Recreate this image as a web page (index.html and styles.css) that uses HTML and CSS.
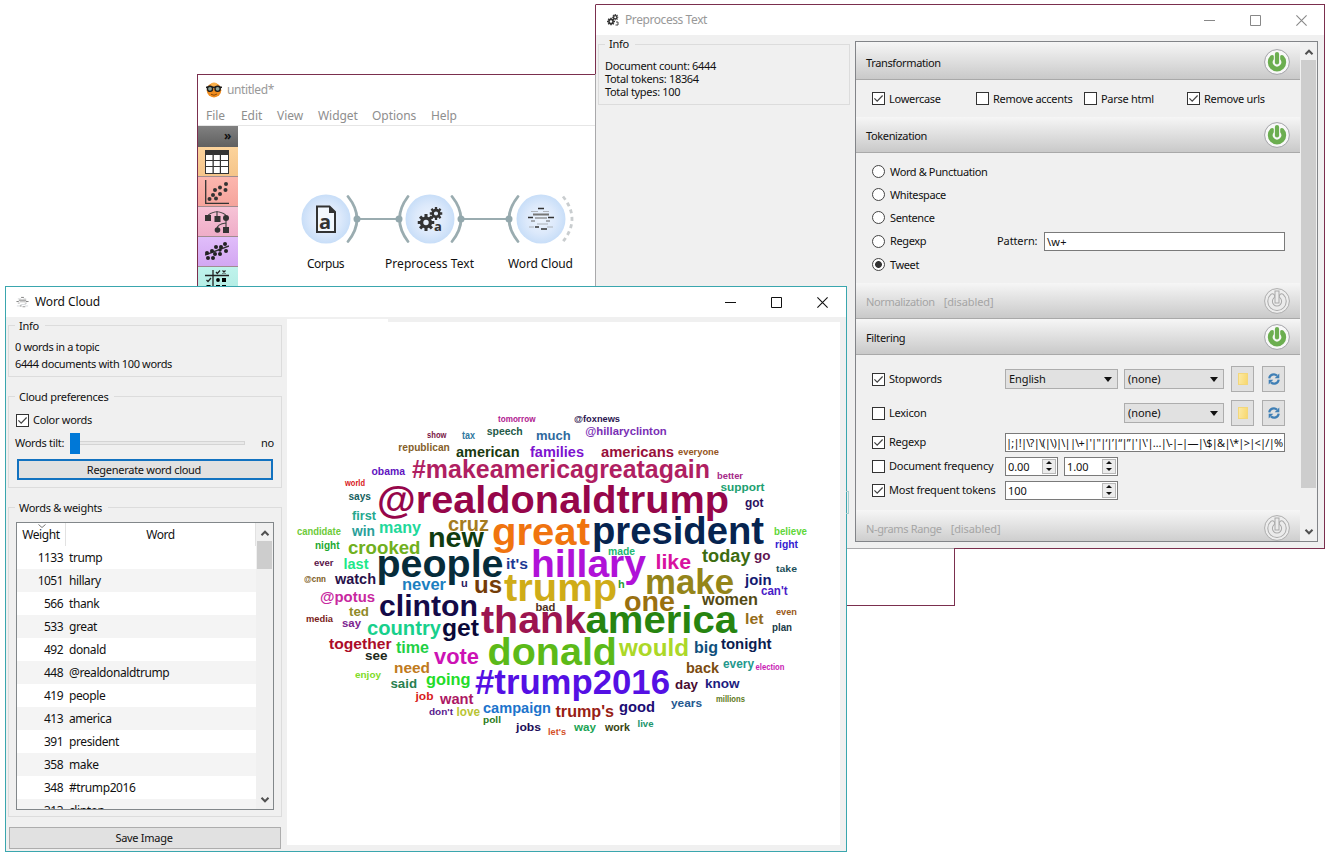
FILE: index.html
```html
<!DOCTYPE html>
<html lang="en">
<head>
<meta charset="utf-8">
<title>Word Cloud workflow</title>
<link rel="stylesheet" href="styles.css">
</head>
<body>
<svg class="defs" width="0" height="0" aria-hidden="true">
  <defs>
    <radialGradient id="node"><stop offset="0" stop-color="#eef5fe"/><stop offset=".6" stop-color="#dce9fb"/><stop offset="1" stop-color="#c8def8"/></radialGradient>
    <symbol id="power-on" viewBox="0 0 26 26"><circle cx="13" cy="13" r="12.4" fill="#f8f8f8" stroke="#a3a3a8"/><path d="M8.2 8.6a6.7 6.7 0 1 0 9.600 0" fill="none" stroke="#6cae50" stroke-width="5" stroke-linecap="round"/><path d="M13 5v8" stroke="#f8f8f8" stroke-width="6.4" stroke-linecap="round"/><path d="M13 5v8.500" stroke="#6cae50" stroke-width="4.2" stroke-linecap="round"/></symbol>
    <symbol id="power-off" viewBox="0 0 26 26"><circle cx="13" cy="13" r="12.4" fill="#ededed" stroke="#adadad"/><path d="M8.4 8.2a6.9 6.9 0 1 0 9.2 0" fill="none" stroke="#a9a9a9" stroke-width="5.6" stroke-linecap="round"/><path d="M8.4 8.2a6.9 6.9 0 1 0 9.2 0" fill="none" stroke="#ebebeb" stroke-width="3.6" stroke-linecap="round"/><path d="M13 5v8" stroke="#a9a9a9" stroke-width="5" stroke-linecap="square"/><path d="M13 5v8" stroke="#ebebeb" stroke-width="3" stroke-linecap="square"/></symbol>
    <symbol id="gear" viewBox="-10 -10 20 20"><circle r="5.2" fill="none" stroke="#333" stroke-width="4"/><path d="M0-10V-6M0 10V6M-10 0H-6M10 0H6M-7-7-4.5-4.5M7 7 4.5 4.5M-7 7-4.5 4.5M7-7 4.5-4.5" stroke="#333" stroke-width="3.6"/></symbol>
    <symbol id="refresh" viewBox="0 0 12 12"><path d="M1.3 5.4A4.6 4.6 0 0 1 9 2.6M10.7 6.6A4.6 4.6 0 0 1 3 9.4" fill="none" stroke="#3f7fb5" stroke-width="2.2"/><path d="M11.3 .6V5.2H6.7zM.7 11.4V6.8H5.3z" fill="#3f7fb5"/></symbol>
    <symbol id="up" viewBox="0 0 10 8"><path d="M1.500 6.2 5 2.700 8.500 6.2" fill="none" stroke="#505050" stroke-width="2"/></symbol>
    <symbol id="down" viewBox="0 0 10 8"><path d="M1.500 1.8 5 5.300 8.500 1.8" fill="none" stroke="#505050" stroke-width="2"/></symbol>
    <symbol id="tick" viewBox="0 0 11 11"><path d="M1.4 5.3 4.2 8.2 9.6 2.5" fill="none" stroke="#444" stroke-width="1.2"/></symbol>
    <symbol id="cloudlines" viewBox="0 0 28 24"><path d="M11 2h6" stroke="#333" stroke-width="1.4"/><path d="M4 5h7M16 5h6" stroke="#b0b4ba"/><path d="M6 8h16" stroke="#777" stroke-width="2"/><path d="M1 11h5M21 11h6M8 20.500h4M14 22.500h6" stroke="#333" stroke-width="1.3"/><path d="M8 11.500h12M4 14.500h4M19 14.500h4" stroke="#666"/><path d="M10 17.500h11M2 20.500h5M20 20.500h6" stroke="#aab0b6"/></symbol>
    <symbol id="min" viewBox="0 0 11 11"><path d="M0 5.5h11" stroke="currentColor"/></symbol>
    <symbol id="max" viewBox="0 0 11 11"><path d="M.5.5h10v10H.5z" fill="none" stroke="currentColor"/></symbol>
    <symbol id="close" viewBox="0 0 11 11"><path d="M.4.4 10.6 10.6M10.6.4.4 10.6" stroke="currentColor" stroke-width="1.1"/></symbol>
  </defs>
</svg>

<section class="window main-window">
  <header class="titlebar main-title">
    <svg class="app-icon" width="16" height="16" viewBox="0 0 16 16"><circle cx="8" cy="8.2" r="7.3" fill="#f08c1e"/><circle cx="8" cy="4" r="3.5" fill="#f9b04c"/><path d="M0 5.3h16" stroke="#222" stroke-width="1.5"/><circle cx="4" cy="6.8" r="2.6" fill="#8da39a" stroke="#1c1c1c" stroke-width="1.4"/><circle cx="11.6" cy="6.8" r="2.6" fill="#8da39a" stroke="#1c1c1c" stroke-width="1.4"/><path d="M5 12.3q3 2 6-.3" fill="none" stroke="#8c4a08"/></svg>
    <span>untitled*</span>
  </header>
  <nav class="menu"><span class="m-file">File</span><span class="m-edit">Edit</span><span class="m-view">View</span><span class="m-widget">Widget</span><span class="m-options">Options</span><span>Help</span></nav>
  <div class="workspace">
    <aside class="toolbox">
      <div class="tool-head">»</div>
      <div class="tool data"><svg width="24" height="24" viewBox="0 0 24 24"><path d="M0 0h24v24H0z" fill="#333"/><path d="M1 5h6.5v5H1zM8.8 5h6v5h-6zM16 5h7v5h-7zM1 11h6.5v5H1zM8.8 11h6v5h-6zM16 11h7v5h-7zM1 17h6.5v6H1zM8.8 17h6v6h-6zM16 17h7v6h-7z" fill="#fff"/></svg></div>
      <div class="tool vis"><svg width="24" height="24" viewBox="0 0 24 24"><path d="M.7 0v23.3H24" fill="none" stroke="#333" stroke-width="1.3"/><g fill="#333"><circle cx="4.500" cy="19" r="2"/><circle cx="8" cy="15" r="2"/><circle cx="11" cy="18.500" r="2"/><circle cx="10" cy="10" r="2"/><circle cx="15" cy="14" r="2"/><circle cx="15" cy="7.500" r="2"/><circle cx="20.500" cy="10" r="2"/><circle cx="21" cy="4" r="2"/></g></svg></div>
      <div class="tool model"><svg width="24" height="24" viewBox="0 0 24 24"><path d="M3 6Q4 3 12 1.500Q20 3 21 6M12 1V7M21 6V18M12 19Q12 14 21 13" fill="none" stroke="#444" stroke-width="1.200"/><path d="M0 5h6v6H0zM9.500 6h6v6h-6zM18 17h6v6h-6z" fill="#333"/><circle cx="21" cy="8" r="3" fill="#333"/><circle cx="12.500" cy="20" r="2.800" fill="#333"/></svg></div>
      <div class="tool regress"><svg width="24" height="24" viewBox="0 0 24 24"><path d="M0 15 24 6" stroke="#333" stroke-width="1.400"/><g fill="#222"><circle cx="2" cy="13" r="2"/><circle cx="3" cy="18" r="2"/><circle cx="8" cy="18" r="2"/><circle cx="7" cy="11" r="2"/><circle cx="10" cy="14" r="2"/><circle cx="11" cy="7" r="2"/><circle cx="15" cy="14" r="2"/><circle cx="16" cy="7" r="2"/><circle cx="20" cy="4" r="2"/><circle cx="21" cy="11" r="2"/><circle cx="15" cy="10" r="1.700"/></g></svg></div>
      <div class="tool evaluate"><svg width="24" height="24" viewBox="0 0 24 24"><path d="M0 5.500h24M8 0v24" stroke="#222" stroke-width="1.300"/><path d="m11 2 1.300 1.500L15 .5M1.500 10 3 11.500 6 8" fill="none" stroke="#222" stroke-width="1.200"/><path d="m17.500.5 3 3m0-3-3 3" stroke="#222" stroke-width="1.200"/><circle cx="13" cy="10" r="1.900"/><path d="M17 8h4v4h-4zM1.500 15h4v4h-4zM11 15h4v4h-4zM17 15h4v4h-4z"/></svg></div>
    </aside>
    <svg class="workflow" width="357" height="160" viewBox="238 126 357 160">
      <g stroke="#9aacb0" fill="none" stroke-width="2"><path d="M357 219H399M461 219H508"/><path d="M348 196.500Q366 219 348 241.500M408 196.500Q391 219 408 241.500M452 196.500Q470 219 452 241.500M518 196.500Q500 219 518 241.500" stroke-width="2.800" stroke-linecap="round"/><path d="M563 196.500Q581 219 563 241.500" stroke="#c9cdcf" stroke-width="2.800" stroke-dasharray="4 3.500"/></g>
      <g fill="#93a8ad"><circle cx="357" cy="219" r="3.500"/><circle cx="399" cy="219" r="3.500"/><circle cx="461" cy="219" r="3.500"/><circle cx="509" cy="219" r="3.500"/></g>
      <g fill="url(#node)"><circle cx="326" cy="219" r="24.500"/><circle cx="430" cy="219" r="24.500"/><circle cx="541" cy="219" r="24.500"/></g>
      <path d="M317 206.500H329.500L335 212V232H317Z" fill="#f2f7fd" stroke="#333" stroke-width="2"/><path d="M329 206V213H336" fill="#333"/>
      <text class="glyph-a" x="319" y="229" font-size="20">a</text>
      <use href="#gear" x="417.500" y="214" width="17" height="17"/><use href="#gear" x="429.500" y="207" width="13" height="13"/>
      <text class="glyph-a" x="434" y="231" font-size="13">a</text>
      <use href="#cloudlines" x="527" y="206.500" width="28" height="24"/>
      <g class="node-label"><text x="307" y="268" textLength="37.500">Corpus</text><text x="385" y="268" textLength="89">Preprocess Text</text><text x="508" y="268" textLength="65">Word Cloud</text></g>
    </svg>
  </div>
</section>

<section class="window prep-window">
  <header class="titlebar prep-title">
    <svg width="12" height="12" viewBox="0 0 12 12"><use href="#gear" x="0" y="3.500" width="8" height="8"/><use href="#gear" x="5" y="0" width="6.500" height="6.500"/><path d="M9 8h2v3H8.500" fill="none" stroke="#444"/></svg>
    <span class="caption">Preprocess Text</span>
    <div class="controls"><svg width="11" height="11"><use href="#min"/></svg><svg width="11" height="11"><use href="#max"/></svg><svg width="11" height="11"><use href="#close"/></svg></div>
  </header>
  <div class="prep-body">
    <fieldset class="group prep-info"><legend>Info</legend><p>Document count: 6444</p><p>Total tokens: 18364</p><p>Total types: 100</p></fieldset>
    <div class="steps">
      <div class="steps-list">
        <div class="step-head first"><span>Transformation</span><svg width="26" height="26"><use href="#power-on"/></svg></div>
        <div class="transform-row">
          <label class="check"><i class="box"><svg width="11" height="11"><use href="#tick"/></svg></i>Lowercase</label>
          <label class="check"><i class="box"></i>Remove accents</label>
          <label class="check"><i class="box"></i>Parse html</label>
          <label class="check"><i class="box"><svg width="11" height="11"><use href="#tick"/></svg></i>Remove urls</label>
        </div>
        <div class="step-head"><span>Tokenization</span><svg width="26" height="26"><use href="#power-on"/></svg></div>
        <div class="token-rows">
          <label class="radio"><i class="dot"></i><span>Word &amp; Punctuation</span></label>
          <label class="radio"><i class="dot"></i>Whitespace</label>
          <label class="radio"><i class="dot"></i>Sentence</label>
          <div class="regexp-row"><label class="radio"><i class="dot"></i>Regexp</label><span class="pattern">Pattern:</span><div class="field">\w+</div></div>
          <label class="radio"><i class="dot on"></i>Tweet</label>
        </div>
        <div class="step-head off"><span>Normalization<b>[disabled]</b></span><svg width="26" height="26"><use href="#power-off"/></svg></div>
        <div class="step-head"><span>Filtering</span><svg width="26" height="26"><use href="#power-on"/></svg></div>
        <div class="filters">
          <div class="filter tall"><label class="check"><i class="box"><svg width="11" height="11"><use href="#tick"/></svg></i>Stopwords</label><div class="combo lang">English<i class="arrow"></i></div><div class="combo file">(none)<i class="arrow"></i></div><div class="tbtn"><i class="folder"></i></div><div class="tbtn"><svg width="12" height="12"><use href="#refresh"/></svg></div></div>
          <div class="filter tall"><label class="check lexicon"><i class="box"></i>Lexicon</label><div class="combo file">(none)<i class="arrow"></i></div><div class="tbtn"><i class="folder"></i></div><div class="tbtn"><svg width="12" height="12"><use href="#refresh"/></svg></div></div>
          <div class="filter"><label class="check"><i class="box"><svg width="11" height="11"><use href="#tick"/></svg></i>Regexp</label><div class="field regex"><span>|;|!|\?|\(|\)|\||\+|'|"|‘|’|“|”|'|\'|…|\-|–|—|\$|&amp;|\*|&gt;|&lt;|/|%</span></div></div>
          <div class="filter"><label class="check"><i class="box"></i>Document frequency</label><div class="spin short">0.00<i class="steppers"><b></b><b></b></i></div><div class="spin short">1.00<i class="steppers"><b></b><b></b></i></div></div>
          <div class="filter"><label class="check"><i class="box"><svg width="11" height="11"><use href="#tick"/></svg></i>Most frequent tokens</label><div class="spin long">100<i class="steppers"><b></b><b></b></i></div></div>
        </div>
        <div class="step-head off"><span>N-grams Range<b>[disabled]</b></span><svg width="26" height="26"><use href="#power-off"/></svg></div>
      </div>
      <div class="scroll"><svg width="10" height="8"><use href="#up"/></svg><div class="thumb"></div><svg class="end" width="10" height="8"><use href="#down"/></svg></div>
    </div>
  </div>
</section>

<section class="window cloud-window">
  <header class="titlebar cloud-title">
    <svg width="13" height="12" viewBox="0 0 28 24"><use href="#cloudlines"/></svg>
    <span class="caption">Word Cloud</span>
    <div class="controls"><svg width="11" height="11"><use href="#min"/></svg><svg width="11" height="11"><use href="#max"/></svg><svg width="11" height="11"><use href="#close"/></svg></div>
  </header>
  <div class="cloud-body">
    <div class="side">
      <fieldset class="group info"><legend>Info</legend><p>0 words in a topic</p><p>6444 documents with 100 words</p></fieldset>
      <fieldset class="group prefs"><legend>Cloud preferences</legend>
        <label class="check"><i class="box"><svg width="11" height="11"><use href="#tick"/></svg></i>Color words</label>
        <div class="tilt"><span class="tilt-label">Words tilt:</span><div class="slider"><i class="knob"></i><i class="track"></i></div><span>no</span></div>
        <button class="regen">Regenerate word cloud</button>
      </fieldset>
      <fieldset class="group weights"><legend>Words &amp; weights</legend>
        <div class="table">
          <div class="rows">
            <div class="thead"><span class="num">Weight<svg class="sort" width="8" height="4" viewBox="0 0 8 4"><path d="M.5.5 4 3.500 7.500.5" fill="none" stroke="#777"/></svg></span><span class="word">Word</span></div>
            <div class="row"><span>1133</span><span>trump</span></div>
            <div class="row"><span>1051</span><span>hillary</span></div>
            <div class="row"><span>566</span><span>thank</span></div>
            <div class="row"><span>533</span><span>great</span></div>
            <div class="row"><span>492</span><span>donald</span></div>
            <div class="row"><span>448</span><span>@realdonaldtrump</span></div>
            <div class="row"><span>419</span><span>people</span></div>
            <div class="row"><span>413</span><span>america</span></div>
            <div class="row"><span>391</span><span>president</span></div>
            <div class="row"><span>358</span><span>make</span></div>
            <div class="row"><span>348</span><span>#trump2016</span></div>
            <div class="row"><span>313</span><span>clinton</span></div>
          </div>
          <div class="scroll"><svg width="10" height="8"><use href="#up"/></svg><div class="thumb"></div><svg class="end" width="10" height="8"><use href="#down"/></svg></div>
        </div>
      </fieldset>
      <button class="save">Save Image</button>
    </div>
    <div class="canvas">
      <svg class="cloud" width="553" height="526" viewBox="287 319 553 526">
        <text x="498" y="422" font-size="9.500" fill="#b0208f" textLength="37.500" lengthAdjust="spacingAndGlyphs">tomorrow</text>
        <text x="574" y="422" font-size="9.500" fill="#2b1650" textLength="46" lengthAdjust="spacingAndGlyphs">@foxnews</text>
        <text x="585.300" y="435" font-size="11.500" fill="#7a2fb5" textLength="81.400" lengthAdjust="spacingAndGlyphs">@hillaryclinton</text>
        <text x="427" y="438" font-size="9.500" fill="#7a1545" textLength="19.500" lengthAdjust="spacingAndGlyphs">show</text>
        <text x="462" y="439" font-size="10" fill="#2f78a0" textLength="13" lengthAdjust="spacingAndGlyphs">tax</text>
        <text x="486.700" y="435" font-size="10.500" fill="#1f5a48" textLength="36" lengthAdjust="spacingAndGlyphs">speech</text>
        <text x="536" y="440" font-size="13.500" fill="#2f6a9e" textLength="34.700" lengthAdjust="spacingAndGlyphs">much</text>
        <text x="398.300" y="451" font-size="10.500" fill="#85602a" textLength="51.500" lengthAdjust="spacingAndGlyphs">republican</text>
        <text x="456" y="457" font-size="14.500" fill="#1a3a10" textLength="63.500" lengthAdjust="spacingAndGlyphs">american</text>
        <text x="530" y="457" font-size="14.500" fill="#7d12d0" textLength="54" lengthAdjust="spacingAndGlyphs">families</text>
        <text x="601" y="457" font-size="14.500" fill="#98103a" textLength="73" lengthAdjust="spacingAndGlyphs">americans</text>
        <text x="678" y="455" font-size="9.500" fill="#945522" textLength="41" lengthAdjust="spacingAndGlyphs">everyone</text>
        <text x="371.500" y="475" font-size="10.500" fill="#6014c0" textLength="33.500" lengthAdjust="spacingAndGlyphs">obama</text>
        <text x="412" y="478" font-size="25" fill="#b01f62" textLength="298" lengthAdjust="spacingAndGlyphs">#makeamericagreatagain</text>
        <text x="717" y="479" font-size="9.500" fill="#a52888" textLength="26" lengthAdjust="spacingAndGlyphs">better</text>
        <text x="720.500" y="491" font-size="11.500" fill="#20a070" textLength="44" lengthAdjust="spacingAndGlyphs">support</text>
        <text x="345" y="485.500" font-size="8.500" fill="#d82020" textLength="20" lengthAdjust="spacingAndGlyphs">world</text>
        <text x="348.500" y="500" font-size="10.500" fill="#155f60" textLength="22.500" lengthAdjust="spacingAndGlyphs">says</text>
        <text x="377" y="512.500" font-size="39.500" fill="#96064a" textLength="352" lengthAdjust="spacingAndGlyphs">@realdonaldtrump</text>
        <text x="745" y="507" font-size="12" fill="#2b1060" textLength="18.500" lengthAdjust="spacingAndGlyphs">got</text>
        <text x="352" y="520" font-size="13" fill="#25a88f" textLength="24" lengthAdjust="spacingAndGlyphs">first</text>
        <text x="352" y="536" font-size="14" fill="#2aa09a" textLength="23" lengthAdjust="spacingAndGlyphs">win</text>
        <text x="379" y="533" font-size="16" fill="#20d89a" textLength="42" lengthAdjust="spacingAndGlyphs">many</text>
        <text x="448" y="531" font-size="19.500" fill="#a57c20" textLength="41" lengthAdjust="spacingAndGlyphs">cruz</text>
        <text x="492" y="545" font-size="39.500" fill="#f0740f" textLength="98" lengthAdjust="spacingAndGlyphs">great</text>
        <text x="592" y="544" font-size="38" fill="#062450" textLength="172" lengthAdjust="spacingAndGlyphs">president</text>
        <text x="428" y="546.500" font-size="28" fill="#103c10" textLength="56" lengthAdjust="spacingAndGlyphs">new</text>
        <text x="348" y="554" font-size="18" fill="#70b020" textLength="72.500" lengthAdjust="spacingAndGlyphs">crooked</text>
        <text x="297" y="535" font-size="10" fill="#6ecb3a" textLength="44" lengthAdjust="spacingAndGlyphs">candidate</text>
        <text x="315" y="548.500" font-size="10" fill="#20a830" textLength="24.500" lengthAdjust="spacingAndGlyphs">night</text>
        <text x="774" y="535" font-size="10" fill="#5fd638" textLength="33" lengthAdjust="spacingAndGlyphs">believe</text>
        <text x="775" y="548" font-size="10" fill="#3520d0" textLength="23" lengthAdjust="spacingAndGlyphs">right</text>
        <text x="314" y="565.500" font-size="9" fill="#5a1548" textLength="19.500" lengthAdjust="spacingAndGlyphs">ever</text>
        <text x="343.500" y="569" font-size="14.500" fill="#20e888" textLength="25" lengthAdjust="spacingAndGlyphs">last</text>
        <text x="376.500" y="576.500" font-size="39" fill="#062c3a" textLength="127" lengthAdjust="spacingAndGlyphs">people</text>
        <text x="506" y="569" font-size="14.500" fill="#1c3a94" textLength="22" lengthAdjust="spacingAndGlyphs">it's</text>
        <text x="531" y="576.500" font-size="39" fill="#b012d8" textLength="115" lengthAdjust="spacingAndGlyphs">hillary</text>
        <text x="608" y="555" font-size="10" fill="#22b872" textLength="27" lengthAdjust="spacingAndGlyphs">made</text>
        <text x="655.500" y="569" font-size="20.500" fill="#d812a0" textLength="35.500" lengthAdjust="spacingAndGlyphs">like</text>
        <text x="702" y="562" font-size="18" fill="#3c6c10" textLength="48.500" lengthAdjust="spacingAndGlyphs">today</text>
        <text x="754" y="560" font-size="13" fill="#601450" textLength="16.500" lengthAdjust="spacingAndGlyphs">go</text>
        <text x="776" y="572" font-size="9.500" fill="#1d505a" textLength="21" lengthAdjust="spacingAndGlyphs">take</text>
        <text x="304" y="582" font-size="9" fill="#7c5a20" textLength="22" lengthAdjust="spacingAndGlyphs">@cnn</text>
        <text x="335" y="584" font-size="14" fill="#28104a" textLength="41" lengthAdjust="spacingAndGlyphs">watch</text>
        <text x="402" y="589.500" font-size="16" fill="#1c80c0" textLength="44" lengthAdjust="spacingAndGlyphs">never</text>
        <text x="461" y="587" font-size="11" fill="#2a1a60">u</text>
        <text x="474" y="593" font-size="23.500" fill="#743c08" textLength="28" lengthAdjust="spacingAndGlyphs">us</text>
        <text x="504" y="600.500" font-size="39.500" fill="#cfac18" textLength="113" lengthAdjust="spacingAndGlyphs">trump</text>
        <text x="618" y="588" font-size="11" fill="#30a030">h</text>
        <text x="645" y="594" font-size="35" fill="#94851a" textLength="89" lengthAdjust="spacingAndGlyphs">make</text>
        <text x="745" y="585" font-size="14" fill="#141a70" textLength="26.500" lengthAdjust="spacingAndGlyphs">join</text>
        <text x="761" y="595" font-size="12" fill="#4a20c8" textLength="26.500" lengthAdjust="spacingAndGlyphs">can't</text>
        <text x="320" y="601.500" font-size="14.500" fill="#c828a0" textLength="55" lengthAdjust="spacingAndGlyphs">@potus</text>
        <text x="349" y="616" font-size="13" fill="#908a28" textLength="20" lengthAdjust="spacingAndGlyphs">ted</text>
        <text x="306" y="622" font-size="9.500" fill="#7a1c20" textLength="27" lengthAdjust="spacingAndGlyphs">media</text>
        <text x="342" y="627" font-size="11.500" fill="#7c2490" textLength="19" lengthAdjust="spacingAndGlyphs">say</text>
        <text x="379" y="616" font-size="30" fill="#140a48" textLength="99" lengthAdjust="spacingAndGlyphs">clinton</text>
        <text x="367" y="635" font-size="20" fill="#18d08c" textLength="74" lengthAdjust="spacingAndGlyphs">country</text>
        <text x="442" y="636" font-size="24" fill="#0a0838" textLength="37" lengthAdjust="spacingAndGlyphs">get</text>
        <text x="481" y="633" font-size="39.500" fill="#9c1450" textLength="105" lengthAdjust="spacingAndGlyphs">thank</text>
        <text x="535.500" y="611" font-size="11" fill="#50301a" textLength="20" lengthAdjust="spacingAndGlyphs">bad</text>
        <text x="585.500" y="633" font-size="39.500" fill="#278410" textLength="151.500" lengthAdjust="spacingAndGlyphs">america</text>
        <text x="624" y="610.500" font-size="28" fill="#9a7010" textLength="51" lengthAdjust="spacingAndGlyphs">one</text>
        <text x="702" y="605" font-size="16" fill="#544a14" textLength="56" lengthAdjust="spacingAndGlyphs">women</text>
        <text x="745" y="624" font-size="15" fill="#946c1a" textLength="18.500" lengthAdjust="spacingAndGlyphs">let</text>
        <text x="776" y="615" font-size="9.500" fill="#9a5818" textLength="21" lengthAdjust="spacingAndGlyphs">even</text>
        <text x="772" y="631" font-size="10" fill="#203a48" textLength="20" lengthAdjust="spacingAndGlyphs">plan</text>
        <text x="329" y="648.500" font-size="14.500" fill="#ac0c28" textLength="62.500" lengthAdjust="spacingAndGlyphs">together</text>
        <text x="396" y="652.500" font-size="16" fill="#1ed044" textLength="33" lengthAdjust="spacingAndGlyphs">time</text>
        <text x="365" y="660" font-size="13.500" fill="#20281a" textLength="22.500" lengthAdjust="spacingAndGlyphs">see</text>
        <text x="434" y="664" font-size="22" fill="#cc12b4" textLength="45" lengthAdjust="spacingAndGlyphs">vote</text>
        <text x="394" y="673" font-size="15.500" fill="#c07a20" textLength="36" lengthAdjust="spacingAndGlyphs">need</text>
        <text x="487.500" y="665" font-size="39.500" fill="#5cba18" textLength="129.500" lengthAdjust="spacingAndGlyphs">donald</text>
        <text x="619" y="655.500" font-size="24" fill="#acd828" textLength="70" lengthAdjust="spacingAndGlyphs">would</text>
        <text x="694" y="653" font-size="16" fill="#10507c" textLength="24" lengthAdjust="spacingAndGlyphs">big</text>
        <text x="721" y="649" font-size="14" fill="#0a1c50" textLength="50.500" lengthAdjust="spacingAndGlyphs">tonight</text>
        <text x="686" y="673" font-size="14.500" fill="#7c4c10" textLength="33" lengthAdjust="spacingAndGlyphs">back</text>
        <text x="723" y="668" font-size="12" fill="#22988c" textLength="31" lengthAdjust="spacingAndGlyphs">every</text>
        <text x="755.500" y="669.500" font-size="8.500" fill="#c81cb4" textLength="29" lengthAdjust="spacingAndGlyphs">election</text>
        <text x="390.500" y="688" font-size="13" fill="#288050" textLength="26.500" lengthAdjust="spacingAndGlyphs">said</text>
        <text x="426" y="685" font-size="16" fill="#22dc28" textLength="44.500" lengthAdjust="spacingAndGlyphs">going</text>
        <text x="355" y="678" font-size="9.500" fill="#80dc28" textLength="26" lengthAdjust="spacingAndGlyphs">enjoy</text>
        <text x="475" y="694" font-size="35" fill="#5410e4" textLength="195" lengthAdjust="spacingAndGlyphs">#trump2016</text>
        <text x="675" y="688.500" font-size="13" fill="#4a0c30" textLength="23" lengthAdjust="spacingAndGlyphs">day</text>
        <text x="705" y="688" font-size="13" fill="#201c80" textLength="34.500" lengthAdjust="spacingAndGlyphs">know</text>
        <text x="415.500" y="699.500" font-size="11.500" fill="#d81c20" textLength="18" lengthAdjust="spacingAndGlyphs">job</text>
        <text x="440" y="704" font-size="14.500" fill="#ac1864" textLength="33.500" lengthAdjust="spacingAndGlyphs">want</text>
        <text x="716" y="701.500" font-size="8.500" fill="#607a20" textLength="29" lengthAdjust="spacingAndGlyphs">millions</text>
        <text x="671" y="707" font-size="11.500" fill="#245890" textLength="31" lengthAdjust="spacingAndGlyphs">years</text>
        <text x="429" y="715" font-size="9.500" fill="#58188c" textLength="24" lengthAdjust="spacingAndGlyphs">don't</text>
        <text x="456.500" y="716" font-size="12" fill="#b8c434" textLength="23.500" lengthAdjust="spacingAndGlyphs">love</text>
        <text x="483" y="713" font-size="14.500" fill="#1c74cc" textLength="68" lengthAdjust="spacingAndGlyphs">campaign</text>
        <text x="555.500" y="717" font-size="16" fill="#982014" textLength="58.500" lengthAdjust="spacingAndGlyphs">trump's</text>
        <text x="619" y="712" font-size="14.500" fill="#1c0c74" textLength="36" lengthAdjust="spacingAndGlyphs">good</text>
        <text x="483" y="723" font-size="9.500" fill="#2c7c20" textLength="18" lengthAdjust="spacingAndGlyphs">poll</text>
        <text x="516" y="731" font-size="11" fill="#200c58" textLength="25" lengthAdjust="spacingAndGlyphs">jobs</text>
        <text x="548" y="735" font-size="9.500" fill="#d45028" textLength="18" lengthAdjust="spacingAndGlyphs">let's</text>
        <text x="574" y="731" font-size="11.500" fill="#1ca454" textLength="22" lengthAdjust="spacingAndGlyphs">way</text>
        <text x="605" y="731" font-size="10.500" fill="#384410" textLength="25" lengthAdjust="spacingAndGlyphs">work</text>
        <text x="637.500" y="727" font-size="9.500" fill="#20946c" textLength="16" lengthAdjust="spacingAndGlyphs">live</text>
      </svg>
    </div>
  </div>
</section>
</body>
</html>
```

FILE: styles.css
```css
* { box-sizing: border-box; }
body { margin: 0; width: 1330px; height: 856px; overflow: hidden; position: relative; background: #fff; color: #111; font: 11px/14px "Noto Sans", "Open Sans", sans-serif; letter-spacing: -0.28px; }
p { margin: 0; }
svg { display: block; flex: none; }
i, b { font-style: normal; font-weight: normal; }
.defs { position: absolute; }

/* Overlapping desktop windows */
.window { position: absolute; display: flex; flex-direction: column; border: 1px solid #7b2f4e; background: #fff; }
.main-window { left: 197px; top: 74px; width: 758px; height: 532px; }
.prep-window { left: 595px; top: 4px; width: 730px; height: 545px; }
.cloud-window { left: 5px; top: 286px; width: 842px; height: 566px; border-color: #3aa6ae; }

.titlebar { display: flex; align-items: center; height: 30px; flex: none; background: #fff; font-size: 12px; letter-spacing: 0; color: #999; }
.controls { display: flex; margin-left: auto; gap: 35px; color: #888; }
.caption { padding-left: 6px; letter-spacing: -.42px; }

/* Main window */
.main-title { padding-left: 8px; gap: 5px; letter-spacing: -.4px; }
.menu { display: flex; height: 21px; padding-left: 8px; line-height: 22px; font-size: 12px; color: #8e8e8e; border-bottom: 1px solid #e6e6e6; letter-spacing: -.05px; }
.m-file { width: 35px; } .m-edit { width: 36px; } .m-view { width: 41px; } .m-widget { width: 54px; } .m-options { width: 59px; }
.workspace { display: flex; align-items: flex-start; }
.toolbox { width: 40px; flex: none; }
.tool-head { height: 21px; padding: 0 7px 0 0; text-align: right; font-size: 12px; font-weight: bold; line-height: 20px; color: #111; background: linear-gradient(#808080, #606060); }
.tool { height: 30px; display: flex; align-items: center; justify-content: center; padding-right: 2px; border-bottom: 1px solid #a08c90; }
.data { background: linear-gradient(#fcd39c, #f5c58a); }
.vis { background: linear-gradient(#fcb6ae, #f5a49c); }
.model { background: linear-gradient(#f6c3d6, #efadc8); }
.regress { background: linear-gradient(#e0bdfa, #d3a7f2); }
.evaluate { background: linear-gradient(#bff3ec, #b0ebe2); }
.glyph-a { font-family: "Open Sans", sans-serif; font-weight: bold; fill: #333; }
.node-label { font-size: 12px; fill: #111; letter-spacing: 0; }

/* Group boxes */
.group { margin: 0; min-width: 0; padding: 0 7px 0 6px; border: 1px solid #dcdcdc; background: none; }
.group legend { margin-left: 0; padding: 0 6px 0 4px; height: 14px; line-height: 15px; }

/* Check boxes and radios */
.check, .radio { display: flex; align-items: center; white-space: nowrap; gap: 4px; }
.radio { gap: 5px; height: 23px; letter-spacing: -.38px; }
.box { width: 13px; height: 13px; flex: none; border: 1px solid #333; background: #fff; }
.dot { width: 13px; height: 13px; flex: none; border: 1px solid #444; border-radius: 50%; background: #fff; }
.dot.on { background: radial-gradient(circle, #333 0 3px, #fff 3.8px); }

/* Scroll bars */
.scroll { width: 17px; flex: none; display: flex; flex-direction: column; align-items: center; padding: 6px 1px 5px 2px; background: #f0f0f0; }
.thumb { width: 100%; background: #cdcdcd; }
.scroll .end { margin-top: auto; }

/* Preprocess window: the edge turns grey where it lies over other windows */
.prep-window { border-color: #7b2f4e #7b2f4e transparent transparent; background: linear-gradient(90deg, #a9a9ab 359px, #7b2f4e 359px) left bottom / 100% 1px no-repeat border-box, linear-gradient(#7b2f4e 70px, #a9a9ab 70px) left top / 1px 100% no-repeat border-box, #f0f0f0; }
.prep-title { padding: 0 17px 0 11px; }
.prep-body { display: flex; align-items: flex-start; padding: 2px 6px 0 2px; }
.prep-info { width: 252px; height: 68px; }
.group.prep-info legend { line-height: 13px; }
.prep-info p { line-height: 13px; letter-spacing: -.32px; }
.prep-info legend + p { padding-top: 8px; }
.steps { display: flex; width: 463px; height: 501px; margin: 4px 0 0 5px; border: 1px solid #828488; overflow: hidden; }
.steps-list { flex: 1; min-width: 0; }
.steps .scroll { padding-left: 1px; }
.steps .thumb { height: 428px; margin-top: 4px; }
.step-head { display: flex; align-items: center; justify-content: space-between; height: 36px; padding: 0 10px; border-bottom: 1px solid #a9a9a9; background: linear-gradient(#f6f6f6, #c9c9c9); letter-spacing: -.36px; }
.step-head span { padding-top: 2px; }
.step-head.first { height: 38px; padding-top: 2px; }
.step-head.off { color: #a5a5a5; }
.step-head b { margin-left: 9px; letter-spacing: -.1px; }
.transform-row { display: grid; grid-template-columns: 104px 108px 103px auto; height: 37px; padding-left: 16px; align-items: center; }
.token-rows { height: 130px; padding: 7px 15px 0 16px; }
.regexp-row { display: flex; align-items: center; height: 24px; }
.regexp-row .radio { width: 125px; }
.pattern { width: 47px; letter-spacing: -.1px; }
.field { flex: 1; height: 19px; padding-left: 2px; border: 1px solid #7a7a7a; background: #fff; line-height: 17px; white-space: nowrap; overflow: hidden; letter-spacing: .2px; }
.filters { height: 155px; padding: 7px 0 0 16px; }
.filter { display: flex; align-items: center; height: 24px; }
.filter.tall { height: 34px; }
.filter .check { width: 133px; flex: none; letter-spacing: -.24px; }
.filter .lexicon { width: 252px; }
.combo { display: flex; align-items: center; justify-content: space-between; height: 20px; padding: 0 5px 0 3px; border: 1px solid #adadad; background: #e1e1e1; letter-spacing: -.1px; }
.lang { width: 113px; margin-right: 6px; }
.file { width: 100px; margin-right: 7px; }
.arrow { border: 4px solid transparent; border-top: 5px solid #111; border-bottom: 0; }
.tbtn { display: flex; align-items: center; justify-content: center; width: 23px; height: 26px; margin-right: 8px; border: 1px solid #adadad; background: #e1e1e1; }
.folder { width: 10px; height: 12px; background: linear-gradient(100deg, #fbe9a4, #f8d870); border: 1px solid #f3d77a; }
.field.regex { flex: none; width: 280px; padding-left: 0; letter-spacing: -.76px; }
.spin { display: flex; height: 19px; padding: 0 1px 0 2px; border: 1px solid #7a7a7a; background: #fff; line-height: 17px; align-items: center; justify-content: space-between; letter-spacing: -.1px; }
.short { width: 53px; margin-right: 6px; }
.short + .short { width: 54px; }
.long { width: 113px; }
.steppers { width: 14px; height: 15px; display: flex; flex-direction: column; border: 1px solid #b8b8b8; background: #ececec; align-items: center; justify-content: space-around; }
.steppers b { border: 3px solid transparent; border-top: 0; border-bottom: 3px solid #111; }
.steppers b + b { border-top: 3px solid #111; border-bottom: 0; }

/* Word Cloud window */
.cloud-title { padding: 0 18px 0 10px; color: #111; }
.cloud-title .caption { padding-left: 6px; letter-spacing: -.1px; }
.cloud-title .controls { color: #111; }
.cloud-body { display: flex; flex: 1; min-height: 0; background: #f0f0f0; padding: 1px 6px 6px 2px; }
.side { width: 274px; flex: none; margin: 0 5px -3px 0; }
.info { height: 59px; }
.info p { line-height: 17px; letter-spacing: -.36px; }
.info legend + p { padding-top: 6px; }
.prefs { margin-top: 12px; height: 99px; }
.prefs .check { padding: 10px 0 0 1px; }
.tilt { display: flex; align-items: center; height: 34px; margin-top: -1px; }
.tilt-label { width: 55px; white-space: nowrap; flex: none; letter-spacing: -.3px; }
.slider { display: flex; align-items: center; margin-right: 16px; width: 175px; flex: none; }
.knob { width: 10px; height: 21px; background: #0078d7; flex: none; }
.track { flex: 1; height: 4px; border: 1px solid #d4d4d4; border-left: 0; background: #e9e9e9; }
button { display: block; padding: 0; font: inherit; letter-spacing: inherit; color: #111; background: #e1e1e1; height: 21px; }
.regen { width: 256px; margin: -1px 0 0 2px; padding-right: 2px; border: 2px solid #1272c0; }
.weights { margin-top: 12px; height: 317px; }
.table { display: flex; width: 258px; height: 288px; margin: 8px 0 0 1px; border: 1px solid #82878a; background: #fff; overflow: hidden; }
.rows { flex: 1; font-size: 12px; letter-spacing: -.4px; line-height: 24px; }
.thead { display: flex; height: 23px; line-height: 24px; }
.thead .num { position: relative; width: 49px; text-align: center; border-right: 1px solid #e2e2e2; }
.thead .word { flex: 1; text-align: center; border-right: 1px solid #e2e2e2; }
.sort { position: absolute; left: 21px; top: 1px; }
.row { display: flex; height: 23px; }
.row:nth-child(odd) { background: #f4f4f4; }
.row span:first-child { width: 46px; text-align: right; letter-spacing: -.55px; }
.row span + span { margin-left: 6px; }
.table .scroll { padding-left: 1px; }
.table .thumb { height: 28px; margin-top: 4px; }
.save { width: 272px; height: 22px; margin: 10px 0 0 1px; padding-right: 2px; border: 1px solid #adadad; }
.canvas { flex: none; width: 553px; margin-top: 1px; background: #fff; }
.canvas::before { content: ""; display: block; height: 3px; margin: 0 0 -3px 101px; background: #f0f0f0; }
.cloud text { font-family: "Liberation Sans", Arial, sans-serif; font-weight: bold; letter-spacing: 0; }
.cloud-window::after { content: ""; position: absolute; right: -3px; top: 204px; width: 2px; height: 21px; border: 1px solid #a8cfd0; border-left: 0; }
```
